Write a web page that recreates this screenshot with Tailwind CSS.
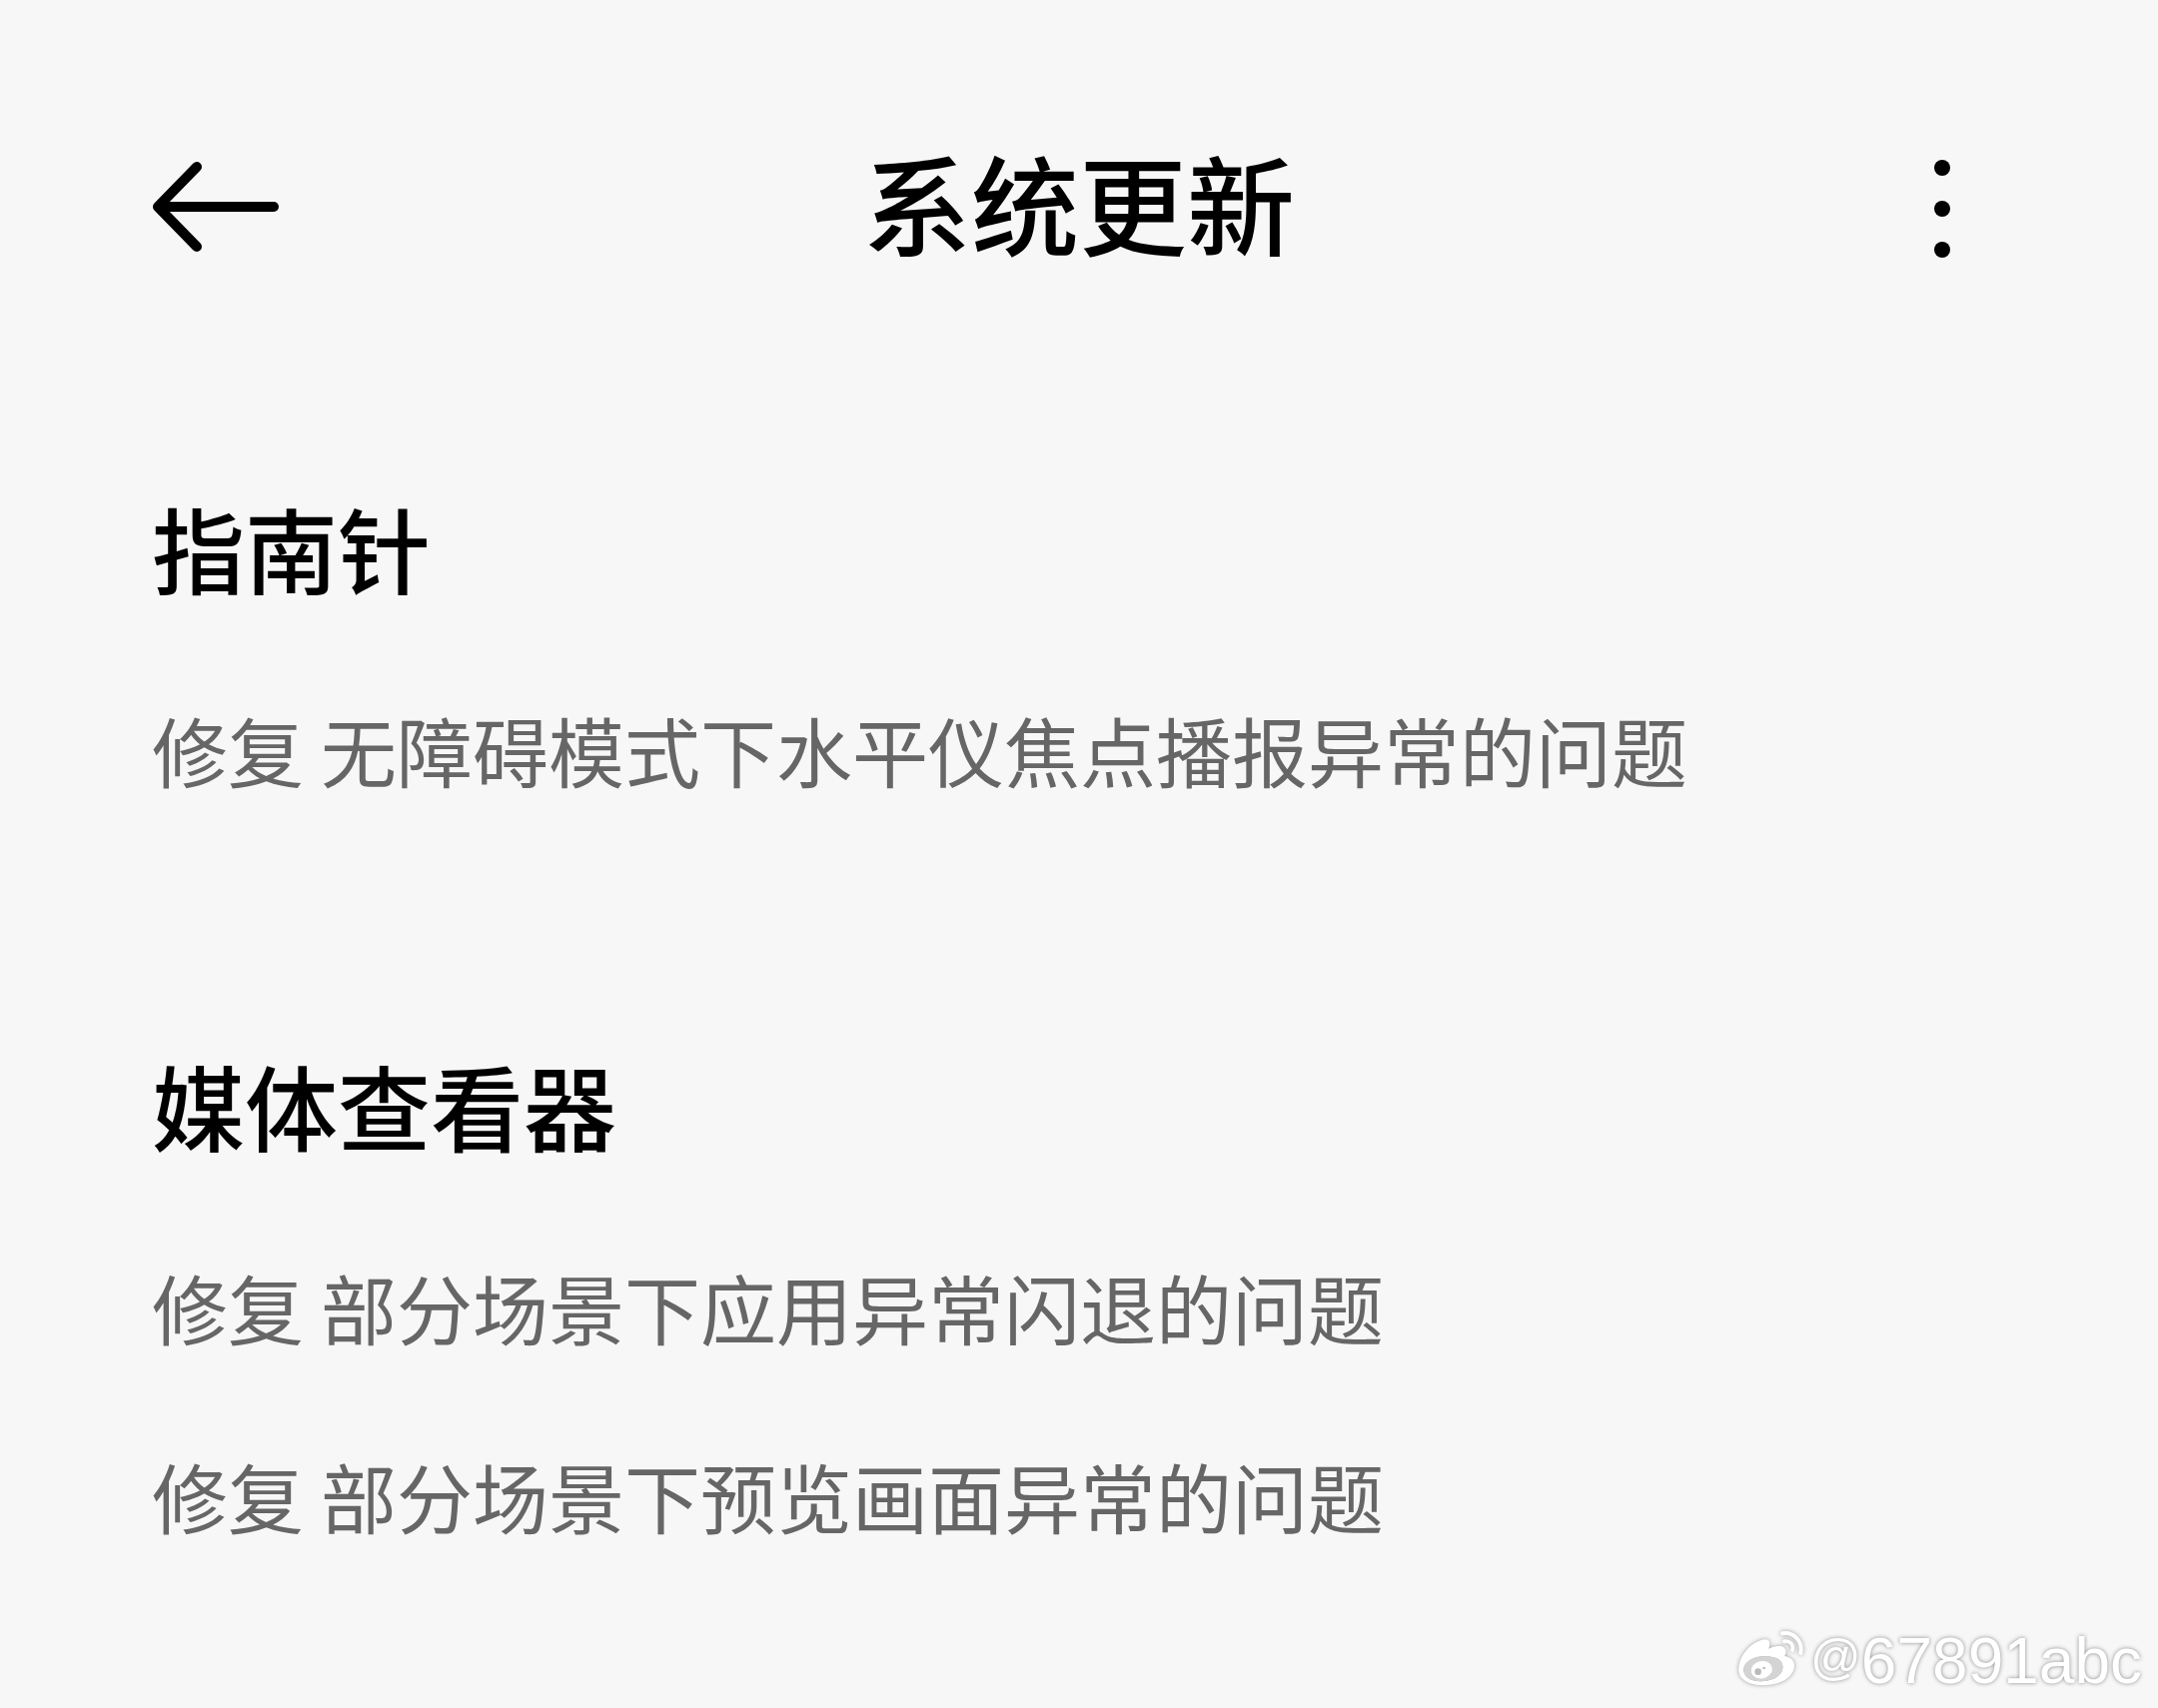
<!DOCTYPE html>
<html lang="zh-CN">
<head>
  <meta charset="UTF-8">
  <meta name="viewport" content="width=device-width, initial-scale=1.0">
  <title>系统更新</title>
  <script src="https://cdn.jsdelivr.net/npm/@tailwindcss/browser@4"></script>
</head>
<body class="relative min-h-screen bg-[#f7f7f7] text-black font-['Noto_Sans_CJK_SC',sans-serif]">
  <header class="flex items-center justify-between px-[152px] pt-[131px]">
    <button type="button" aria-label="返回" class="w-32 h-[140px] flex items-center justify-start">
      <svg class="w-32 h-28 mt-3" viewBox="0 0 128 112" fill="none" stroke="currentColor" stroke-width="10" stroke-linecap="round" stroke-linejoin="round">
        <path d="M45 16 L6 56 L45 96"/>
        <path d="M8 56 H122"/>
      </svg>
    </button>
    <h1 class="text-[108px] leading-[140px] font-medium">系统更新</h1>
    <button type="button" aria-label="更多" class="w-32 h-[140px] flex items-center justify-center">
      <svg class="w-32 h-28 mt-3" viewBox="0 0 128 112" fill="currentColor">
        <circle cx="64" cy="17" r="8"/>
        <circle cx="64" cy="58" r="8"/>
        <circle cx="64" cy="99" r="8"/>
      </svg>
    </button>
  </header>

  <main class="px-[152px] pt-[217px] space-y-[246px]">
    <section>
      <h2 class="text-[93px] leading-[120px] font-medium">指南针</h2>
      <ul class="mt-[92px] text-[76px] leading-[100px] text-[#666]">
        <li>修复 无障碍模式下水平仪焦点播报异常的问题</li>
      </ul>
    </section>
    <section>
      <h2 class="text-[93px] leading-[120px] font-medium">媒体查看器</h2>
      <ul class="mt-[92px] space-y-[89px] text-[76px] leading-[100px] text-[#666]">
        <li>修复 部分场景下应用异常闪退的问题</li>
        <li>修复 部分场景下预览画面异常的问题</li>
      </ul>
    </section>
  </main>

  <!-- watermark -->
  <div class="absolute right-4 bottom-2 flex items-center text-white font-['Liberation_Sans',sans-serif]">
    <svg class="w-[70px] h-[60px] mr-1 mb-1 drop-shadow-[0_0_2px_#999]" viewBox="50 65 210 180" fill="none">
      <path fill="#fff" fill-rule="evenodd" d="M57 190 C54 150 92 103 134 96 C150 95 154 106 147 124 C163 116 184 113 194 121 C201 128 199 138 195 146 C213 149 226 160 224 178 C221 210 181 234 131 234 C88 233 58 216 57 190 Z M72 190 C76 214 100 224 132 221 C168 218 191 200 189 176 C187 155 162 144 128 147 C94 150 70 168 72 190 Z"/>
      <path fill="#d4d4d4" d="M72 190 C76 214 100 224 132 221 C168 218 191 200 189 176 C187 155 162 144 128 147 C94 150 70 168 72 190 Z"/>
      <ellipse cx="126" cy="187" rx="32" ry="26" fill="#fff" transform="rotate(-12 126 187)"/>
      <circle cx="115" cy="193" r="10" fill="#bbb"/>
      <circle cx="133" cy="182" r="4" fill="#bbb"/>
      <path d="M188 78 C222 73 251 101 243 137" stroke="#fff" stroke-width="12" stroke-linecap="round"/>
      <path d="M194 102 C211 99 223 112 218 129" stroke="#fff" stroke-width="11" stroke-linecap="round"/>
    </svg>
    <div class="flex items-center leading-[70px] [text-shadow:0_0_4px_#888]">
      <span class="text-[50px] mb-2">@</span>
      <span class="text-[64px]">67891abc</span>
    </div>
  </div>
</body>
</html>
